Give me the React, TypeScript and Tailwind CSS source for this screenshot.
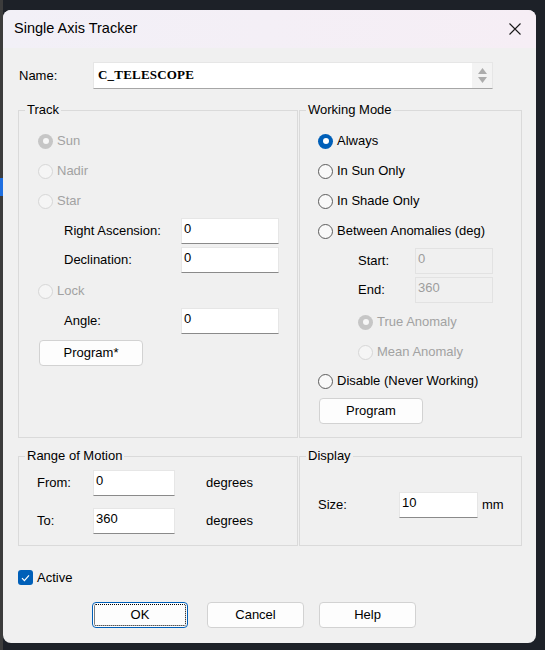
import React from "react";

const FONT = { fontFamily: '"Liberation Sans", Arial, sans-serif' };

type RadioProps = { checked?: boolean; disabled?: boolean };

function Radio({ checked, disabled }: RadioProps) {
  if (checked && !disabled)
    return (
      <span className="w-[15px] h-[15px] rounded-full bg-[#005fb8] flex items-center justify-center shrink-0">
        <span className="w-[6px] h-[6px] rounded-full bg-white" />
      </span>
    );
  if (checked)
    return (
      <span className="w-[15px] h-[15px] rounded-full bg-[#c6c6c6] flex items-center justify-center shrink-0">
        <span className="w-[6px] h-[6px] rounded-full bg-[#f7f7f7]" />
      </span>
    );
  if (disabled)
    return <span className="w-[15px] h-[15px] rounded-full border border-[#d6d6d6] bg-[#f5f5f5] shrink-0" />;
  return <span className="w-[15px] h-[15px] rounded-full border border-[#5c5c5c] bg-[#f9f9f9] shrink-0" />;
}

function RadioRow({ label, h, pl, checked, disabled }: { label: string; h: string; pl: string; checked?: boolean; disabled?: boolean }) {
  return (
    <div className={`flex items-center gap-[4px] ${h} ${pl}`}>
      <Radio checked={checked} disabled={disabled} />
      <span className={disabled ? "text-[#a2a2a2]" : "text-black"}>{label}</span>
    </div>
  );
}

function Field({ value, w, disabled }: { value: string; w: string; disabled?: boolean }) {
  return (
    <div
      className={`${w} h-[26px] shrink-0 pl-[2px] pt-[2px] leading-[16px] border ${
        disabled
          ? "bg-[#f0f0f0] border-[#e2e2e2] text-[#9d9d9d]"
          : "bg-white border-[#e6e6e6] border-b-[#8a8a8a] text-black"
      }`}
    >
      {value}
    </div>
  );
}

function Button({ label, w, focused }: { label: string; w: string; focused?: boolean }) {
  return (
    <div
      className={`${w} h-[26px] shrink-0 flex items-center justify-center rounded-[4px] bg-[#fdfdfd] border ${
        focused ? "border-[#005fb8] outline-1 outline-dotted outline-black outline-offset-[-3px]" : "border-[#d2d2d2]"
      }`}
    >
      {label}
    </div>
  );
}

function Group({ title, w, h, children }: { title: string; w: string; h: string; children: React.ReactNode }) {
  return (
    <fieldset className={`${w} ${h} border border-[#dadada] shrink-0`}>
      <legend className="ml-[6px] px-[2px] leading-[16px]">{title}</legend>
      {children}
    </fieldset>
  );
}

export default function App() {
  return (
    <div className="w-[545px] h-[650px] bg-[#1d2128] flex overflow-hidden text-[13px] text-black" style={FONT}>
      {/* sliver of the window behind */}
      <div className="w-[3px] h-full bg-[#3c3c3c] flex flex-col">
        <div className="h-[178px]" />
        <div className="h-[18px] bg-[#1f6fe0]" />
      </div>

      <div className="mt-[10px] w-[533px] h-[633px] rounded-[8px] bg-[#f0f0f0] flex flex-col overflow-hidden">
        {/* title bar */}
        <div className="h-[38px] shrink-0 flex items-center justify-between pl-[11px] pr-[15px] bg-linear-to-r from-[#f2f0f7] to-[#f6eef5]">
          <span className="text-[14.5px]">Single Axis Tracker</span>
          <svg width="12" height="12" viewBox="0 0 12 12" className="mt-[-1px]">
            <path d="M0.5 0.5 L11.5 11.5 M11.5 0.5 L0.5 11.5" stroke="#1a1a1a" strokeWidth="1.1" />
          </svg>
        </div>

        <div className="flex flex-col px-[15px] pt-[14px]">
          {/* name */}
          <div className="flex items-center h-[27px]">
            <span className="ml-[1px] w-[74px]">Name:</span>
            <div className="w-[400px] h-[27px] flex bg-white border border-[#e6e6e6] border-b-[#a6a6a6]">
              <span
                className="flex-1 pl-[4px] pt-[3px] text-[13px] font-bold leading-[17px] tracking-[0.2px]"
                style={{ fontFamily: '"Liberation Serif", "Times New Roman", serif' }}
              >
                C_TELESCOPE
              </span>
              <div className="w-[20px] bg-[#f3f3f3] flex flex-col items-center justify-center gap-[3px]">
                <svg width="9" height="6" viewBox="0 0 9 6">
                  <path d="M4.5 0 L9 6 L0 6 Z" fill="#acacac" />
                </svg>
                <svg width="9" height="6" viewBox="0 0 9 6">
                  <path d="M0 0 L9 0 L4.5 6 Z" fill="#acacac" />
                </svg>
              </div>
            </div>
          </div>

          {/* track + working mode */}
          <div className="flex gap-[1px] mt-[13px]">
            <Group title="Track" w="w-[280px]" h="h-[336px]">
              <div className="flex flex-col pt-[8px]">
                <RadioRow label="Sun" h="h-[30px]" pl="pl-[19px]" checked disabled />
                <RadioRow label="Nadir" h="h-[30px]" pl="pl-[19px]" disabled />
                <RadioRow label="Star" h="h-[30px]" pl="pl-[19px]" disabled />
                <div className="flex items-center h-[30px] pl-[45px]">
                  <span className="w-[117px]">Right Ascension:</span>
                  <Field value="0" w="w-[98px]" />
                </div>
                <div className="flex items-center h-[28px] pl-[45px]">
                  <span className="w-[117px]">Declination:</span>
                  <Field value="0" w="w-[98px]" />
                </div>
                <RadioRow label="Lock" h="h-[34px]" pl="pl-[19px]" disabled />
                <div className="flex items-center h-[26px] pl-[45px]">
                  <span className="w-[117px]">Angle:</span>
                  <Field value="0" w="w-[98px]" />
                </div>
                <div className="pl-[20px] mt-[6px]">
                  <Button label="Program*" w="w-[104px]" />
                </div>
              </div>
            </Group>

            <Group title="Working Mode" w="w-[223px]" h="h-[336px]">
              <div className="flex flex-col pt-[8px]">
                <RadioRow label="Always" h="h-[30px]" pl="pl-[18px]" checked />
                <RadioRow label="In Sun Only" h="h-[30px]" pl="pl-[18px]" />
                <RadioRow label="In Shade Only" h="h-[30px]" pl="pl-[18px]" />
                <RadioRow label="Between Anomalies (deg)" h="h-[30px]" pl="pl-[18px]" />
                <div className="flex items-center h-[30px] pl-[58px]">
                  <span className="w-[57px]">Start:</span>
                  <Field value="0" w="w-[78px]" disabled />
                </div>
                <div className="flex items-center h-[28px] pl-[58px]">
                  <span className="w-[57px]">End:</span>
                  <Field value="360" w="w-[78px]" disabled />
                </div>
                <RadioRow label="True Anomaly" h="h-[36px]" pl="pl-[58px]" checked disabled />
                <RadioRow label="Mean Anomaly" h="h-[24px]" pl="pl-[58px]" disabled />
                <RadioRow label="Disable (Never Working)" h="h-[34px]" pl="pl-[18px]" />
                <div className="pl-[19px]">
                  <Button label="Program" w="w-[104px]" />
                </div>
              </div>
            </Group>
          </div>

          {/* range of motion + display */}
          <div className="flex gap-[1px] mt-[10px]">
            <Group title="Range of Motion" w="w-[280px]" h="h-[98px]">
              <div className="flex flex-col pt-[6px] pl-[18px] gap-[12px]">
                <div className="flex items-center h-[26px]">
                  <span className="w-[56px]">From:</span>
                  <Field value="0" w="w-[82px]" />
                  <span className="ml-[31px]">degrees</span>
                </div>
                <div className="flex items-center h-[26px]">
                  <span className="w-[56px]">To:</span>
                  <Field value="360" w="w-[82px]" />
                  <span className="ml-[31px]">degrees</span>
                </div>
              </div>
            </Group>

            <Group title="Display" w="w-[223px]" h="h-[98px]">
              <div className="flex items-center h-[26px] mt-[28px] pl-[18px]">
                <span className="w-[81px]">Size:</span>
                <Field value="10" w="w-[79px]" />
                <span className="ml-[4px]">mm</span>
              </div>
            </Group>
          </div>

          {/* active */}
          <div className="flex items-center gap-[4px] mt-[24px] h-[15px]">
            <span className="w-[15px] h-[15px] rounded-[3px] bg-[#005fb8] flex items-center justify-center">
              <svg width="9" height="8" viewBox="0 0 9 8">
                <path d="M1 4.2 L3.4 6.6 L8 1.4" stroke="white" strokeWidth="1.2" fill="none" />
              </svg>
            </span>
            <span>Active</span>
          </div>

          {/* buttons */}
          <div className="flex mt-[17px] pl-[74px]">
            <Button label="OK" w="w-[96px]" focused />
            <div className="ml-[19px]">
              <Button label="Cancel" w="w-[97px]" />
            </div>
            <div className="ml-[15px]">
              <Button label="Help" w="w-[97px]" />
            </div>
          </div>
        </div>
      </div>
    </div>
  );
}
